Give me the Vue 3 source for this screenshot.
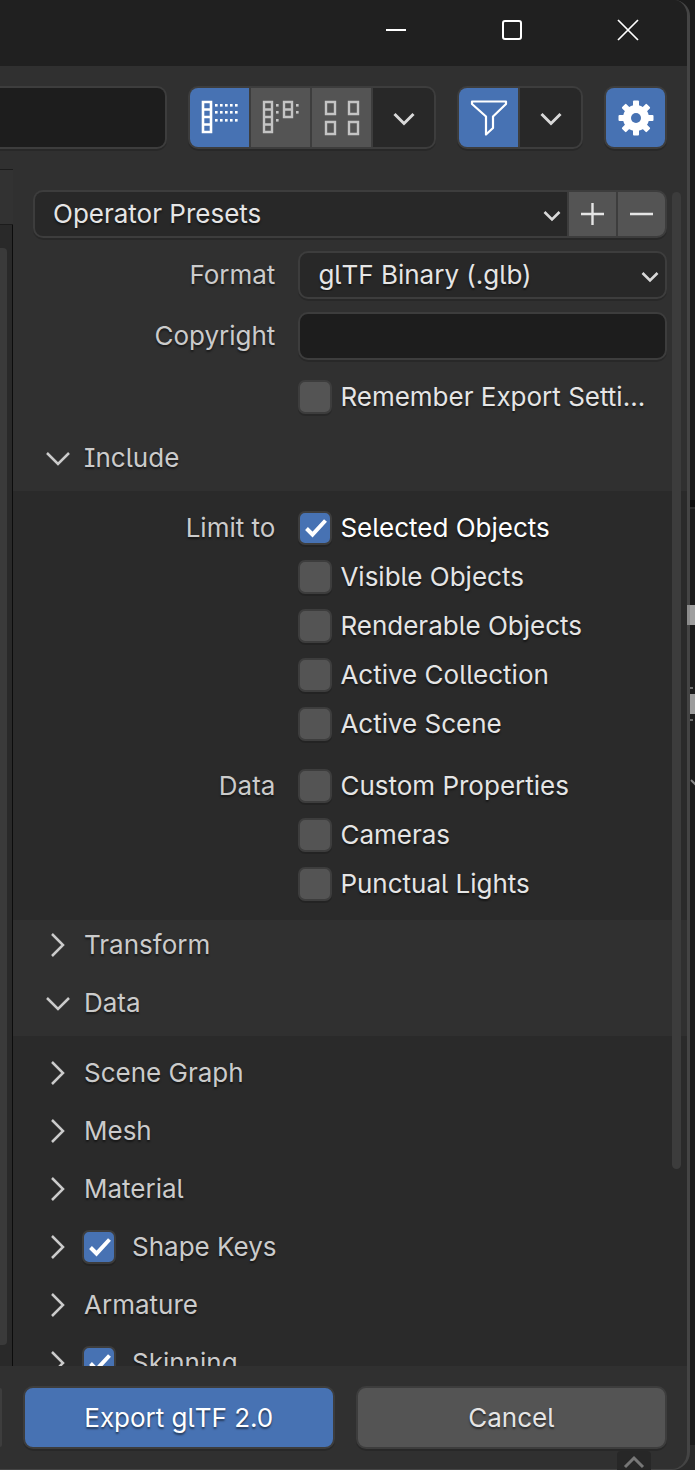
<script setup>
import { ref, reactive } from 'vue'

const search = ref('')
const preset = ref('Operator Presets')
const format = ref('glTF Binary (.glb)')
const copyright = ref('')
const remember = ref(false)
const display = ref('list')

const limits = reactive([
  { label: 'Selected Objects', on: true },
  { label: 'Visible Objects', on: false },
  { label: 'Renderable Objects', on: false },
  { label: 'Active Collection', on: false },
  { label: 'Active Scene', on: false },
])
const dataOptions = reactive([
  { label: 'Custom Properties', on: false },
  { label: 'Cameras', on: false },
  { label: 'Punctual Lights', on: false },
])
const subPanels = reactive([
  { label: 'Scene Graph' },
  { label: 'Mesh' },
  { label: 'Material' },
  { label: 'Shape Keys', check: true, on: true },
  { label: 'Armature' },
  { label: 'Skinning', check: true, on: true },
])
const dotsX = [15, 20, 25, 30, 35]
const dotsY = [4, 11, 19]
</script>

<template>
  <div class="desktop">
    <div class="backdrop" aria-hidden="true">
      <i class="band"></i>
      <i class="tick t1"></i>
      <i class="tick t2"></i>
      <i class="block"></i>
      <svg class="slash" width="5" height="8" viewBox="0 0 5 8"><path d="M1 1L6 6" stroke="#8a8a8a" stroke-width="2" /></svg>
      <i class="floor"></i>
    </div>
    <main class="window">
      <header class="titlebar">
        <button aria-label="Minimize"><svg width="22" height="22" viewBox="0 0 22 22"><path d="M1 11H21" stroke="#fff" stroke-width="2" /></svg></button>
        <button aria-label="Maximize"><svg width="22" height="22" viewBox="0 0 22 22"><rect x="2" y="2" width="18" height="18" rx="2" fill="none" stroke="#fff" stroke-width="2" /></svg></button>
        <button aria-label="Close"><svg width="22" height="22" viewBox="0 0 22 22"><path d="M1 1L21 21M21 1L1 21" stroke="#fff" stroke-width="1.7" /></svg></button>
      </header>

      <div class="toolbar">
        <input v-model="search" class="field search" type="text" aria-label="Search" />
        <div class="group">
          <button class="seg" :class="{ active: display === 'list' }" aria-label="Vertical list" @click="display = 'list'">
            <svg width="40" height="36" viewBox="0 0 40 36" fill="none" stroke="currentColor" stroke-width="2">
              <path d="M3 2H11V32H3ZM3 9.5H11M3 17H11M3 24.5H11" stroke-width="2.6" />
              <g fill="currentColor" stroke="none">
                <template v-for="y in dotsY" :key="y">
                  <rect v-for="x in dotsX" :key="x" :x="x" :y="y" width="2.6" height="2.6" />
                </template>
              </g>
            </svg>
          </button>
          <button class="seg" :class="{ active: display === 'short' }" aria-label="Horizontal list" @click="display = 'short'">
            <svg width="40" height="36" viewBox="0 0 40 36" fill="none" stroke="currentColor" stroke-width="2.4">
              <path d="M3 2H11V32H3ZM3 9.5H11M3 17H11M3 24.5H11M23 2H31V17H23ZM23 9.5H31" />
              <g fill="currentColor" stroke="none">
                <rect v-for="y in dotsY" :key="y" x="15" :y="y" width="2.6" height="2.6" />
                <rect x="35" y="4" width="2.6" height="2.6" />
                <rect x="35" y="11" width="2.6" height="2.6" />
              </g>
            </svg>
          </button>
          <button class="seg" :class="{ active: display === 'thumb' }" aria-label="Thumbnails" @click="display = 'thumb'">
            <svg width="40" height="36" viewBox="0 0 40 36" fill="none" stroke="currentColor" stroke-width="2.4">
              <path d="M4 2H13V14H4ZM27 2H36V14H27ZM4 22H13V34H4ZM27 22H36V34H27Z" />
            </svg>
          </button>
          <button class="seg drop" aria-label="Display settings">
            <svg width="22" height="14" viewBox="0 0 22 14" fill="none" stroke="currentColor" stroke-width="3"><path d="M1.500 2L11 11.500L20.500 2" /></svg>
          </button>
        </div>
        <div class="group">
          <button class="seg active" aria-label="Filter">
            <svg width="38" height="38" viewBox="0 0 38 38" fill="none" stroke="currentColor" stroke-width="2.2" stroke-linejoin="round"><path d="M2 2.500H36V5L23 17.500V29L16 35.500V17.500L2 5Z" /></svg>
          </button>
          <button class="seg drop" aria-label="Filter settings">
            <svg width="22" height="14" viewBox="0 0 22 14" fill="none" stroke="currentColor" stroke-width="3"><path d="M1.500 2L11 11.500L20.500 2" /></svg>
          </button>
        </div>
        <div class="group">
          <button class="seg active" aria-label="Toggle options">
            <svg width="36" height="36" viewBox="0 0 36 36">
              <g fill="currentColor">
                <rect v-for="a in [0, 45, 90, 135]" :key="a" x="15" y="0.500" width="6" height="35" rx="1" :transform="`rotate(${a} 18 18)`" />
              </g>
              <circle cx="18" cy="18" r="9" fill="none" stroke="currentColor" stroke-width="8" />
              <circle cx="18" cy="18" r="5" class="hub" />
            </svg>
          </button>
        </div>
      </div>

      <div class="body">
        <aside class="files" aria-hidden="true">
          <div class="files-head"></div>
          <div class="files-list"><i></i></div>
        </aside>

        <section class="options">
          <div class="scroller">
            <div class="rows">
              <div class="presets group">
                <div class="select">
                  <select v-model="preset" aria-label="Operator Presets"><option>Operator Presets</option></select>
                  <svg width="18" height="12" viewBox="0 0 18 12"><path d="M1.500 2L9 9.500L16.500 2" /></svg>
                </div>
                <button class="seg small" aria-label="Add preset"><svg width="23" height="24" viewBox="0 0 23 24"><path d="M11.500 1V23M0 12H23" stroke="currentColor" stroke-width="2.4" /></svg></button>
                <button class="seg small" aria-label="Remove preset"><svg width="23" height="24" viewBox="0 0 23 24"><path d="M0 12H23" stroke="currentColor" stroke-width="2.4" /></svg></button>
              </div>
              <div class="row">
                <label class="name" for="format">Format</label>
                <div class="select boxed">
                  <select id="format" v-model="format"><option>glTF Binary (.glb)</option></select>
                  <svg width="18" height="12" viewBox="0 0 18 12"><path d="M1.500 2L9 9.500L16.500 2" /></svg>
                </div>
              </div>
              <div class="row">
                <label class="name" for="copyright">Copyright</label>
                <input id="copyright" v-model="copyright" class="field" type="text" />
              </div>
              <div class="row">
                <span></span>
                <label class="check" title="Remember Export Settings"><input v-model="remember" type="checkbox" /><span>Remember Export Setti...</span></label>
              </div>
            </div>

            <div class="panel-head">
              <button class="twist"><svg width="24" height="24" viewBox="0 0 24 24"><path d="M1 7L12 18L23 7" /></svg>Include</button>
            </div>
            <div class="panel-body">
              <div class="checks">
                <div v-for="(o, i) in limits" :key="o.label" class="row">
                  <span class="name">{{ i === 0 ? 'Limit to' : '' }}</span>
                  <label class="check"><input v-model="o.on" type="checkbox" /><span>{{ o.label }}</span></label>
                </div>
              </div>
              <div class="checks">
                <div v-for="(o, i) in dataOptions" :key="o.label" class="row">
                  <span class="name">{{ i === 0 ? 'Data' : '' }}</span>
                  <label class="check"><input v-model="o.on" type="checkbox" /><span>{{ o.label }}</span></label>
                </div>
              </div>
            </div>

            <div class="panel-head">
              <button class="twist"><svg width="24" height="24" viewBox="0 0 24 24"><path d="M6 1L17 12L6 23" /></svg>Transform</button>
            </div>
            <div class="panel-head">
              <button class="twist"><svg width="24" height="24" viewBox="0 0 24 24"><path d="M1 7L12 18L23 7" /></svg>Data</button>
            </div>
            <div class="sub-panels">
              <div v-for="p in subPanels" :key="p.label" class="panel-head">
                <button class="twist" :aria-label="p.label"><svg width="24" height="24" viewBox="0 0 24 24"><path d="M6 1L17 12L6 23" /></svg><template v-if="!p.check">{{ p.label }}</template></button>
                <label v-if="p.check" class="check wide"><input v-model="p.on" type="checkbox" /><span>{{ p.label }}</span></label>
              </div>
            </div>
          </div>
          <i class="scrollbar"></i>
        </section>
      </div>

      <footer class="footer">
        <i class="stub"></i>
        <button class="action primary">Export glTF 2.0</button>
        <button class="action">Cancel</button>
      </footer>
    </main>
    <i class="overlap" aria-hidden="true"></i>
    <div class="tab" aria-hidden="true">
      <svg width="22" height="14" viewBox="0 0 22 14" fill="none" stroke="#777" stroke-width="3"><path d="M2 12L11 3L20 12" /></svg>
    </div>
  </div>
</template>

<style>
body {
  background: #1c1c1c;
}
</style>

<style scoped>
* {
  box-sizing: border-box;
}
.desktop {
  position: relative;
  height: 100vh;
  padding-right: 5px;
  overflow: hidden;
  background: #1c1c1c;
  color: #e5e5e5;
  font-family: Inter, "Noto Sans", sans-serif;
  font-size: 26px;
  line-height: 32px;
  font-feature-settings: "cv05", "cv08";
  text-shadow: 0 2px 2px rgba(0, 0, 0, 0.5);
}
button,
input,
select {
  margin: 0;
  padding: 0;
  border: 0;
  background: none;
  color: inherit;
  font: inherit;
  font-feature-settings: inherit;
  text-shadow: inherit;
}
svg {
  display: block;
  flex: none;
}
.backdrop {
  position: absolute;
  top: 0;
  right: 0;
  bottom: 0;
  width: 24px;
}
.backdrop > * {
  position: absolute;
  right: 0;
}
.band {
  top: 500px;
  width: 5px;
  height: 9px;
  background: #0e0e0e;
  border-bottom: 2px solid #2c2c2c;
}
.block {
  top: 694px;
  width: 5px;
  height: 20px;
  background: #9c9c9c;
}
.tick {
  width: 5px;
  height: 2px;
  background: linear-gradient(90deg, #6e6e6e 3px, transparent 3px);
}
.t1 {
  top: 687px;
}
.t2 {
  top: 719px;
}
.slash {
  top: 779px;
}
.floor {
  bottom: 0;
  width: 24px;
  height: 25px;
  background: #2a2a2a;
}
.window {
  position: relative;
  display: flex;
  flex-direction: column;
  height: 100%;
  overflow: hidden;
  background: #303030;
  border-right: 3px solid #444;
  border-bottom: 1px solid #444;
  border-radius: 0 16px 18px 0;
}
.titlebar {
  display: flex;
  flex: none;
  justify-content: flex-end;
  height: 66px;
  padding: 0 1px 6px 0;
  background: #202020;
}
.titlebar button {
  display: grid;
  place-items: center;
  width: 116px;
}
.field {
  width: 100%;
  min-width: 0;
  padding: 0 16px;
  background: #1d1d1d;
  border: 2px solid #3d3d3d;
  border-radius: 10px;
  box-shadow: 0 2px 0 rgba(0, 0, 0, 0.15);
}
.toolbar {
  display: flex;
  flex: none;
  gap: 21px;
  height: 103px;
  padding: 20px 20px 20px 0;
}
.search {
  flex: 1;
  border-left: 0;
  border-radius: 0 10px 10px 0;
}
.group {
  display: flex;
  gap: 2px;
  overflow: hidden;
  background: #3d3d3d;
  border: 2px solid #3d3d3d;
  border-radius: 10px;
  box-shadow: 0 2px 0 rgba(0, 0, 0, 0.15);
}
.seg {
  display: grid;
  place-items: center;
  width: 59px;
  background: #545454;
  color: #c4c4c4;
}
.seg.active {
  background: #4772b3;
  color: #fff;
}
.seg.drop {
  width: 61px;
  padding-top: 3px;
  background: #282828;
  color: #d9d9d9;
}
.seg.small {
  width: 47px;
  color: #e5e5e5;
}
.hub {
  fill: #4772b3;
}
.body {
  display: flex;
  flex: 1;
  min-height: 0;
}
.files {
  display: flex;
  flex: none;
  flex-direction: column;
  width: 13px;
}
.files-head {
  height: 56px;
  background: #323232;
  border-top: 1px solid #1c1c1c;
  border-bottom: 1px solid #1c1c1c;
}
.files-list {
  flex: 1;
  padding: 23px 0 21px;
  background: #292929;
  border-right: 1px solid #0c0c0c;
}
.files-list i {
  display: block;
  width: 7px;
  height: 100%;
  background: #3a3a3a;
  border-radius: 0 4px 4px 0;
}
.options {
  position: relative;
  flex: 1;
  min-width: 0;
}
.scroller {
  height: 100%;
  overflow-y: auto;
  scrollbar-width: none;
}
.scrollbar {
  position: absolute;
  top: 23px;
  right: 6px;
  width: 9px;
  height: 82%;
  max-height: 977px;
  background: #3c3c3c;
  border-radius: 5px;
}
.rows {
  display: grid;
  gap: 13px;
  padding: 21px 20px 12px;
}
.presets {
  height: 48px;
}
.select {
  display: flex;
  flex: 1;
  align-items: center;
  min-width: 0;
  padding: 0 6px 0 0;
  background: #282828;
}
.select.boxed {
  border: 2px solid #3d3d3d;
  border-radius: 10px;
  box-shadow: 0 2px 0 rgba(0, 0, 0, 0.15);
}
.select select {
  flex: 1;
  align-self: stretch;
  min-width: 0;
  padding-left: 18px;
  appearance: none;
}
.select svg {
  margin-top: 3px;
  fill: none;
  stroke: #d9d9d9;
  stroke-width: 2.6;
  pointer-events: none;
}
.row {
  display: grid;
  grid-template-columns: minmax(0, 242fr) minmax(0, 368fr);
  gap: 23px;
  height: 48px;
}
.name {
  align-self: center;
  color: #cbcbcb;
  text-align: right;
}
.check {
  display: flex;
  align-items: center;
  gap: 8px;
  min-width: 0;
}
.check.wide {
  gap: 16px;
}
.check span {
  min-width: 0;
  padding: 2px 0;
  overflow: hidden;
  text-overflow: ellipsis;
  white-space: nowrap;
}
.check input {
  flex: none;
  width: 34px;
  height: 34px;
  appearance: none;
  background: #545454;
  border: 2px solid #3d3d3d;
  border-radius: 7px;
  box-shadow: 0 2px 0 rgba(0, 0, 0, 0.15);
}
.check input:checked {
  background: #4772b3 url("data:image/svg+xml,%3Csvg xmlns='http://www.w3.org/2000/svg' viewBox='0 0 30 30'%3E%3Cpath d='M6.500 15.500L12.500 21.500L25.500 7.500' fill='none' stroke='white' stroke-width='4'/%3E%3C/svg%3E") center / 30px 30px no-repeat;
}
.row .check input:checked + span {
  color: #fff;
}
.panel-head {
  display: flex;
  align-items: center;
  gap: 12px;
  height: 50px;
  margin-bottom: 8px;
  padding: 0 33px;
  color: #cbcbcb;
}
.twist {
  display: flex;
  align-items: center;
  gap: 14px;
}
.twist svg {
  fill: none;
  stroke: #cbcbcb;
  stroke-width: 2.5;
}
.panel-body {
  display: grid;
  gap: 13px;
  padding: 12px 20px;
  background: #2a2a2a;
}
.checks .row {
  height: 49px;
}
.sub-panels {
  padding: 12px 0;
  background: #2a2a2a;
}
.footer {
  display: flex;
  flex: none;
  gap: 21px;
  height: 103px;
  padding: 20px 20px 20px 0;
}
.stub {
  width: 2px;
  margin: 2px 0;
  background: #3d3d3d;
  border-radius: 0 2px 2px 0;
}
.action {
  flex: 1;
  background: #545454;
  border: 2px solid #3d3d3d;
  border-radius: 10px;
  box-shadow: 0 2px 0 rgba(0, 0, 0, 0.15);
}
.action.primary {
  background: #4772b3;
  color: #fff;
}
.overlap {
  position: absolute;
  top: 605px;
  right: 0;
  width: 8px;
  height: 20px;
  background: linear-gradient(90deg, #8c8c8c 3px, #a0a0a0 3px);
}
.tab {
  position: absolute;
  right: 44px;
  bottom: 0;
  display: grid;
  justify-items: center;
  width: 34px;
  height: 19px;
  padding-top: 4px;
  background: #272727;
  border-radius: 4px 4px 0 0;
}
</style>
